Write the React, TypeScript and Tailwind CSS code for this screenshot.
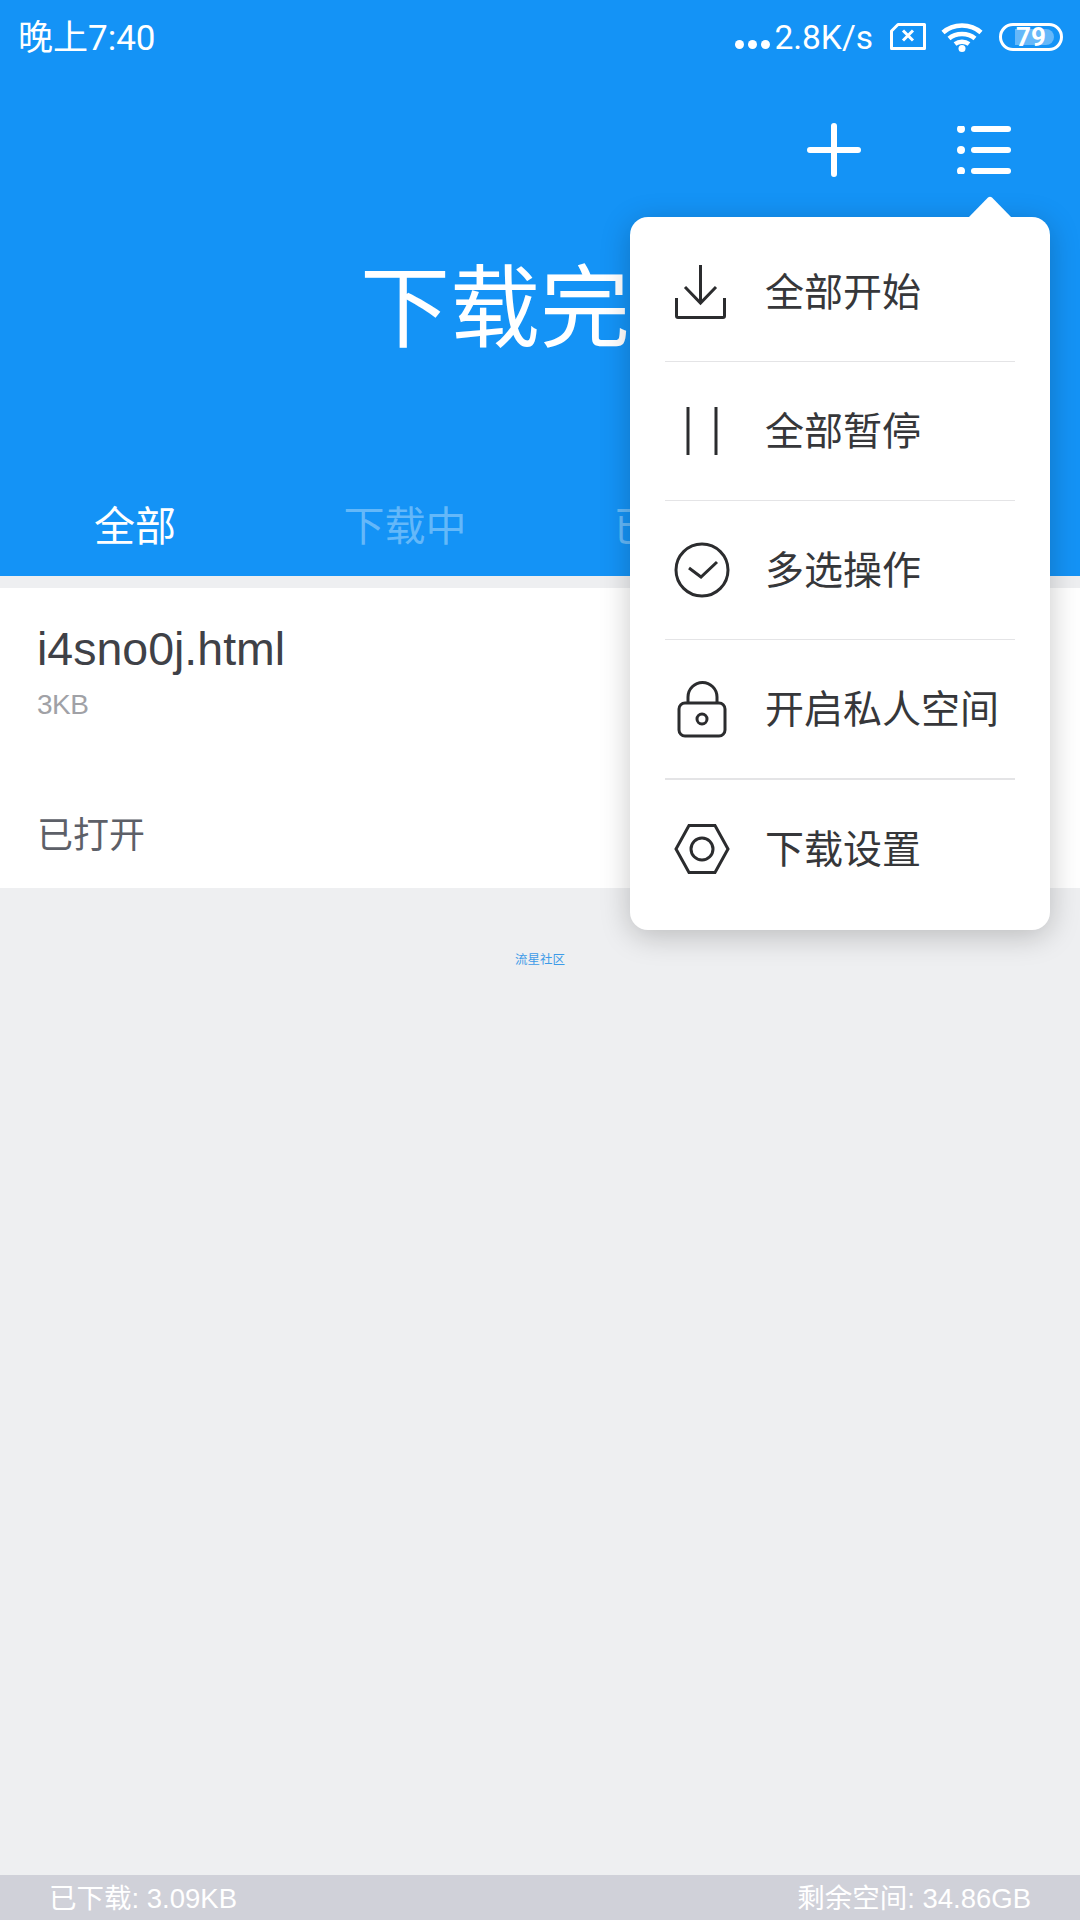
const cjk = "font-['Roboto','Noto_Sans_CJK_SC',sans-serif]";
const latin = "font-['Liberation_Sans','Noto_Sans_CJK_SC',sans-serif]";

function MenuIcon({ children }: { children: React.ReactNode }) {
  return (
    <svg width="60" height="60" viewBox="0 0 60 60" fill="none" stroke="#2b2c2e" strokeWidth="3" className="shrink-0">
      {children}
    </svg>
  );
}

const menuItems = [
  {
    label: "全部开始",
    icon: (
      <>
        <path d="M4.5 36V54a1.5 1.5 0 0 0 1.5 1.5H51a1.5 1.5 0 0 0 1.5-1.5V36" />
        <path d="M28.5 3V41M13 25L28.5 41L44 25" />
      </>
    ),
  },
  {
    label: "全部暂停",
    icon: <path d="M16 6V54M44 6V54" />,
  },
  {
    label: "多选操作",
    icon: (
      <>
        <circle cx="30" cy="30" r="26" />
        <path d="M17 28L29 37L45 22" />
      </>
    ),
  },
  {
    label: "开启私人空间",
    icon: (
      <>
        <rect x="7" y="24" width="46" height="33" rx="6" />
        <path d="M16 24V18a14 14 0 0 1 29 0V24" />
        <circle cx="30" cy="40" r="5" />
      </>
    ),
  },
  {
    label: "下载设置",
    icon: (
      <>
        <path d="M17 6.5H43L56 30L43 53.5H17L4 30Z" />
        <circle cx="30" cy="30" r="11" />
      </>
    ),
  },
];

function StatusBar() {
  return (
    <div className={`flex h-[74px] items-center justify-between pl-[18px] pr-[17px] text-white ${cjk}`}>
      <span className="mt-[2px] text-[35px] leading-none">晚上7:40</span>
      <div className="flex items-center">
        <div className="mt-[15px] flex gap-[4px]">
          <span className="size-[9px] rounded-full bg-white" />
          <span className="size-[9px] rounded-full bg-white" />
          <span className="size-[9px] rounded-full bg-white" />
        </div>
        <span className="ml-[4px] mt-[2px] text-[33.5px] leading-none">2.8K/s</span>
        <svg width="36" height="27" viewBox="0 0 36 27" fill="none" stroke="white" strokeWidth="3" className="mb-[1px] ml-[17px]">
          <path d="M8 1.5H34.5V25.5H1.5V8Z" strokeLinejoin="round" />
          <path d="M13 7.5L23 17.5M23 7.5L13 17.5" />
        </svg>
        <svg width="42" height="30" viewBox="0 0 42 30" fill="none" stroke="white" strokeWidth="4.5" className="ml-[15px]">
          <path d="M2 10.5C12 1 30 1 40 10.5" />
          <path d="M8 16.5C15 10.5 27 10.5 34 16.5" />
          <path d="M14 22C18 19 24 19 28 22" />
          <circle cx="21" cy="26.5" r="3.5" fill="white" stroke="none" />
        </svg>
        <div className="relative ml-[16px] flex h-[28px] w-[64px] items-center justify-center rounded-full border-[3px] border-white">
          <div className="absolute inset-y-[3px] left-[13px] right-[6px] rounded-r-full bg-white/35" />
          <span className="relative text-[26px] font-bold leading-none">79</span>
        </div>
      </div>
    </div>
  );
}

function Header() {
  return (
    <header className="flex h-[576px] shrink-0 flex-col bg-[#1493f6]">
      <StatusBar />
      <div className="flex h-[152px] items-center justify-end pr-[69px]">
        <svg width="54" height="54" viewBox="0 0 54 54" fill="none" stroke="white" strokeWidth="6" strokeLinecap="round">
          <path d="M27 3V51M3 27H51" />
        </svg>
        <svg width="54" height="48" viewBox="0 0 54 48" fill="white" className="ml-[96px]">
          <circle cx="4" cy="3" r="4" />
          <circle cx="4" cy="24" r="4" />
          <circle cx="4" cy="45" r="4" />
          <rect x="14" y="0" width="40" height="6" rx="3" />
          <rect x="14" y="21" width="40" height="6" rx="3" />
          <rect x="14" y="42" width="40" height="6" rx="3" />
        </svg>
      </div>
      <h1 className={`mt-[5px] flex h-[158px] items-center justify-center text-[90px] font-normal leading-none text-white ${cjk}`}>
        下载完成
      </h1>
      <nav className={`mb-[7px] mt-auto flex h-[82px] items-center text-[41px] ${cjk}`}>
        <span className="w-[270px] text-center text-white">全部</span>
        <span className="w-[270px] text-center text-white/35">下载中</span>
        <span className="w-[270px] text-center text-white/35">已完成</span>
      </nav>
    </header>
  );
}

function DownloadRow() {
  return (
    <section className="mt-3 flex h-[300px] flex-col bg-white pl-[37px]">
      <p className={`mt-[31px] text-[46.5px] leading-[60px] text-[#3f4147] ${latin}`}>i4sno0j.html</p>
      <p className={`mt-[9px] text-[28px] leading-[34px] tracking-[-0.5px] text-[#a0a1a6] ${latin}`}>3KB</p>
      <p className={`mt-[89px] text-[36px] leading-[50px] text-[#5d6068] ${cjk}`}>已打开</p>
    </section>
  );
}

function PopupMenu() {
  return (
    <div className="absolute left-[630px] top-[217px] w-[420px] rounded-[18px] bg-white pb-[12px] pt-[6px] shadow-[0_6px_30px_rgba(0,0,0,0.22)]">
      <svg width="46" height="22" viewBox="0 0 46 22" fill="white" className="absolute left-[337px] top-[-21px]">
        <path d="M1 22L21 1.5Q23 0 25 1.5L45 22Z" />
      </svg>
      {menuItems.map((item, i) => (
        <div key={item.label}>
          {i > 0 && <div className={`mx-[35px] bg-[#e4e4e6] ${i === 4 ? "h-[2px]" : "h-px"}`} />}
          <div className="flex h-[138px] items-center pl-[42px]">
            <MenuIcon>{item.icon}</MenuIcon>
            <span className={`ml-[33px] mt-[2px] text-[39px] leading-none text-[#36373a] ${cjk}`}>{item.label}</span>
          </div>
        </div>
      ))}
    </div>
  );
}

export default function App() {
  return (
    <div className="relative flex h-[1920px] w-[1080px] flex-col overflow-hidden bg-[#eeeff1]">
      <Header />
      <DownloadRow />
      <p className={`mt-[62px] text-center text-[12.5px] leading-[20px] text-[#3d9be8] ${cjk}`}>流星社区</p>
      <footer className={`mt-auto flex h-[45px] items-center justify-between bg-[#d0d1d9] px-[49px] pt-[2px] text-[27.5px] text-white ${latin}`}>
        <span>已下载: 3.09KB</span>
        <span>剩余空间: 34.86GB</span>
      </footer>
      <PopupMenu />
    </div>
  );
}
